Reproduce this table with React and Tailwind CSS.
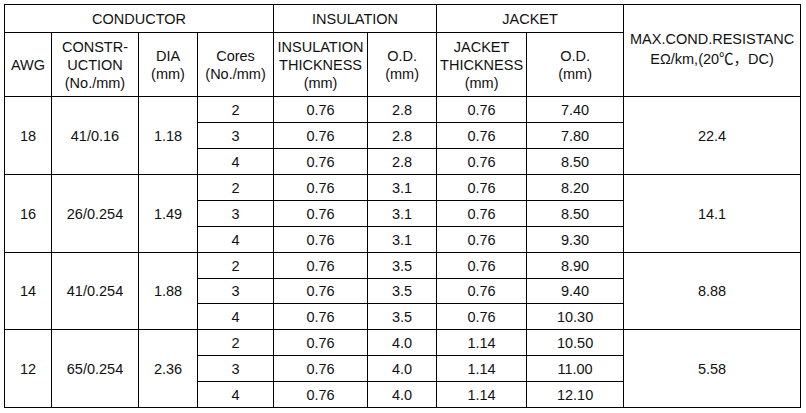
const groups = [
  {
    awg: "18",
    con: "41/0.16",
    dia: "1.18",
    res: "22.4",
    rows: [
      ["2", "0.76", "2.8", "0.76", "7.40"],
      ["3", "0.76", "2.8", "0.76", "7.80"],
      ["4", "0.76", "2.8", "0.76", "8.50"],
    ],
  },
  {
    awg: "16",
    con: "26/0.254",
    dia: "1.49",
    res: "14.1",
    rows: [
      ["2", "0.76", "3.1", "0.76", "8.20"],
      ["3", "0.76", "3.1", "0.76", "8.50"],
      ["4", "0.76", "3.1", "0.76", "9.30"],
    ],
  },
  {
    awg: "14",
    con: "41/0.254",
    dia: "1.88",
    res: "8.88",
    rows: [
      ["2", "0.76", "3.5", "0.76", "8.90"],
      ["3", "0.76", "3.5", "0.76", "9.40"],
      ["4", "0.76", "3.5", "0.76", "10.30"],
    ],
  },
  {
    awg: "12",
    con: "65/0.254",
    dia: "2.36",
    res: "5.58",
    rows: [
      ["2", "0.76", "4.0", "1.14", "10.50"],
      ["3", "0.76", "4.0", "1.14", "11.00"],
      ["4", "0.76", "4.0", "1.14", "12.10"],
    ],
  },
];

const cell = "border border-black text-center align-middle p-0";

export default function App() {
  return (
    <div className="w-[806px] h-[413px] bg-white pt-[4px] pl-[4px] font-['Liberation_Sans','Noto_Sans_CJK_SC',sans-serif] text-[14.5px] leading-[18px] text-[#111]">
      <table className="border-collapse table-fixed w-[797px]">
        <colgroup>
          <col className="w-[47px]" />
          <col className="w-[87px]" />
          <col className="w-[59px]" />
          <col className="w-[76px]" />
          <col className="w-[94px]" />
          <col className="w-[69px]" />
          <col className="w-[90px]" />
          <col className="w-[97px]" />
          <col className="w-[177px]" />
        </colgroup>
        <tbody>
          <tr className="h-[28px]">
            <td colSpan={4} className={cell}>CONDUCTOR</td>
            <td colSpan={2} className={cell}>INSULATION</td>
            <td colSpan={2} className={cell}>JACKET</td>
            <td rowSpan={2} className={`${cell} leading-[20px] pb-[4px]`}>
              MAX.COND.RESISTANC
              <br />
              EΩ/km,(20℃，DC)
            </td>
          </tr>
          <tr className="h-[64px]">
            <td className={cell}>AWG</td>
            <td className={cell}>
              CONSTR-
              <br />
              UCTION
              <br />
              (No./mm)
            </td>
            <td className={cell}>
              DIA
              <br />
              (mm)
            </td>
            <td className={cell}>
              Cores
              <br />
              (No./mm)
            </td>
            <td className={cell}>
              INSULATION
              <br />
              THICKNESS
              <br />
              (mm)
            </td>
            <td className={cell}>
              O.D.
              <br />
              (mm)
            </td>
            <td className={cell}>
              JACKET
              <br />
              THICKNESS
              <br />
              (mm)
            </td>
            <td className={cell}>
              O.D.
              <br />
              (mm)
            </td>
          </tr>
          {groups.map((g, gi) =>
            g.rows.map((r, ri) => (
              <tr key={`${gi}-${ri}`} className={gi === 2 && ri === 1 ? "h-[25px]" : "h-[26px]"}>
                {ri === 0 && (
                  <>
                    <td rowSpan={3} className={cell}>{g.awg}</td>
                    <td rowSpan={3} className={cell}>{g.con}</td>
                    <td rowSpan={3} className={cell}>{g.dia}</td>
                  </>
                )}
                {r.map((v, vi) => (
                  <td key={vi} className={cell}>{v}</td>
                ))}
                {ri === 0 && (
                  <td rowSpan={3} className={cell}>{g.res}</td>
                )}
              </tr>
            ))
          )}
        </tbody>
      </table>
    </div>
  );
}
